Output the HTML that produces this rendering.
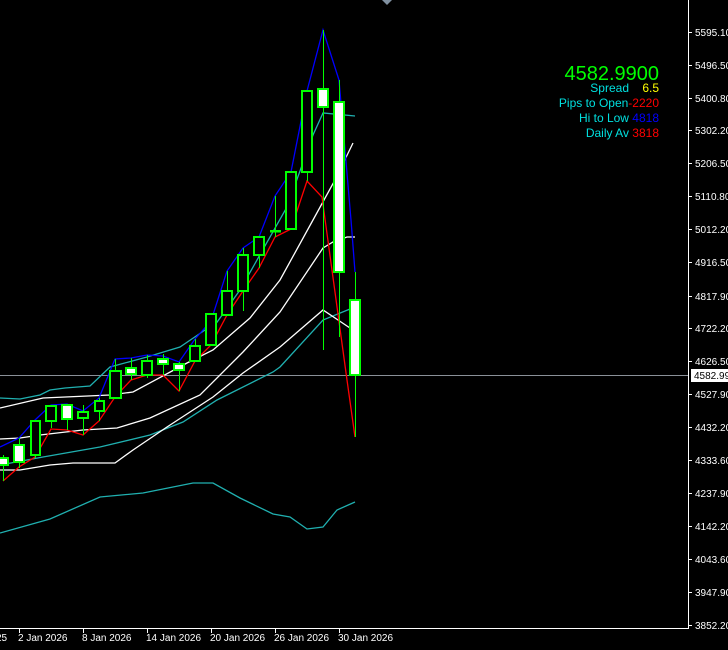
<!DOCTYPE html>
<html><head><meta charset="utf-8"><style>
html,body{margin:0;padding:0;background:#000;width:728px;height:650px;overflow:hidden}
svg{display:block}
text{font-family:"Liberation Sans",sans-serif}
</style></head><body>
<svg width="728" height="650" viewBox="0 0 728 650" xmlns="http://www.w3.org/2000/svg">
<rect width="728" height="650" fill="#000"/>
<polygon points="382,0 392,0 387,5" fill="#8090a0"/>
<line x1="0" y1="375.5" x2="689" y2="375.5" stroke="#8a9098" stroke-width="1"/>
<g fill="none" stroke-width="1.3">
<polyline stroke="#20b0b0" points="0,533 50,519 100,497 143,493 193,483 213,483 240,498 273,514 290,517 307,529 323,527 337,510 355,502"/>
<polyline stroke="#20b0b0" points="0,465 43,457 100,447 150,435 183,422 217,400 273,372 280,367 323,320 350,309"/>
<polyline stroke="#20b0b0" points="0,398 20,399 40,395 50,390 65,388 90,386 110,367 147,357 180,347 205,330 215,325 240,290 287,207 313,135 323,113 355,116"/>
<polyline stroke="#fff" points="0,470 20,470 50,465 73,463 115,463 133,450 167,427 213,397 243,373 280,347 323,310 350,328"/>
<polyline stroke="#fff" points="0,439 20,438 40,435 83,430 117,428 150,418 200,395 243,352 280,312 323,248 333,242 347,237 355,237"/>
<polyline stroke="#fff" points="0,408 43,398 110,395 133,392 187,363 213,350 250,318 280,280 313,220 335,180 353,143"/>
<polyline stroke="#0000ff" points="0,447 19,438 35,420 51,405 67,404 83,411 99,398 115,359 131,358 147,355 163,356 179,362 195,339 211,321 227,271 243,248 259,237 275,196 291,172 307,91 323,30 339,80 351,220 355,272"/>
<polyline stroke="#ff0000" points="3,481 19,467 35,457 51,429 67,430 83,435 99,421 115,397 131,380 147,375 163,375 179,391 195,361 211,345 227,315 243,291 259,268 275,237 291,229 307,181 322,197 347,380 355,437"/>
</g>
<g fill="#00ff00" shape-rendering="crispEdges">
<rect x="3" y="455" width="1.2" height="26"/>
<rect x="19" y="438" width="1.2" height="30"/>
<rect x="35" y="420" width="1.2" height="38"/>
<rect x="51" y="405" width="1.2" height="23"/>
<rect x="67" y="404" width="1.2" height="26"/>
<rect x="83" y="405" width="1.2" height="30"/>
<rect x="99" y="398" width="1.2" height="23"/>
<rect x="115" y="359" width="1.2" height="39"/>
<rect x="131" y="358" width="1.2" height="22"/>
<rect x="147" y="355" width="1.2" height="23"/>
<rect x="163" y="354" width="1.2" height="21"/>
<rect x="179" y="362" width="1.2" height="29"/>
<rect x="195" y="339" width="1.2" height="22"/>
<rect x="211" y="314" width="1.2" height="31"/>
<rect x="227" y="271" width="1.2" height="44"/>
<rect x="243" y="248" width="1.2" height="63"/>
<rect x="259" y="237" width="1.2" height="31"/>
<rect x="275" y="196" width="1.2" height="41"/>
<rect x="291" y="172" width="1.2" height="57"/>
<rect x="307" y="91" width="1.2" height="90"/>
<rect x="323" y="30" width="1.2" height="320"/>
<rect x="339" y="80" width="1.2" height="257"/>
<rect x="355" y="272" width="1.2" height="165"/>
<rect x="270" y="230" width="11" height="2.5"/>
</g>
<g stroke="#00ff00" stroke-width="2" shape-rendering="crispEdges">
<rect x="-1" y="458" width="9" height="7" fill="#fff"/>
<rect x="14" y="445" width="10" height="17" fill="#fff"/>
<rect x="31" y="421" width="9" height="34" fill="#000"/>
<rect x="46" y="406" width="10" height="15" fill="#000"/>
<rect x="62" y="405" width="10" height="14" fill="#fff"/>
<rect x="78" y="412" width="10" height="6" fill="#000"/>
<rect x="95" y="401" width="9" height="10" fill="#000"/>
<rect x="110" y="371" width="11" height="27" fill="#000"/>
<rect x="126" y="368" width="10" height="6" fill="#fff"/>
<rect x="142" y="361" width="10" height="14" fill="#000"/>
<rect x="158" y="359" width="10" height="5" fill="#fff"/>
<rect x="174" y="364" width="10" height="6" fill="#fff"/>
<rect x="190" y="346" width="10" height="15" fill="#000"/>
<rect x="206" y="314" width="10" height="31" fill="#000"/>
<rect x="222" y="291" width="10" height="24" fill="#000"/>
<rect x="238" y="255" width="10" height="36" fill="#000"/>
<rect x="254" y="237" width="10" height="18" fill="#000"/>
<rect x="286" y="172" width="10" height="57" fill="#000"/>
<rect x="302" y="91" width="10" height="81" fill="#000"/>
<rect x="318" y="89" width="10" height="18" fill="#fff"/>
<rect x="334" y="102" width="10" height="170" fill="#fff"/>
<rect x="350" y="300" width="10" height="75" fill="#fff"/>
</g>
<g stroke="#fff" stroke-width="1" shape-rendering="crispEdges">
<line x1="688.5" y1="0" x2="688.5" y2="628"/>
<line x1="0" y1="628.5" x2="689" y2="628.5"/>
<line x1="19.5" y1="628" x2="19.5" y2="633"/><line x1="83.5" y1="628" x2="83.5" y2="633"/><line x1="147.5" y1="628" x2="147.5" y2="633"/><line x1="211.5" y1="628" x2="211.5" y2="633"/><line x1="275.5" y1="628" x2="275.5" y2="633"/><line x1="339.5" y1="628" x2="339.5" y2="633"/>
<line x1="689" y1="32.5" x2="692" y2="32.5"/><line x1="689" y1="65.5" x2="692" y2="65.5"/><line x1="689" y1="98.5" x2="692" y2="98.5"/><line x1="689" y1="130.5" x2="692" y2="130.5"/><line x1="689" y1="163.5" x2="692" y2="163.5"/><line x1="689" y1="196.5" x2="692" y2="196.5"/><line x1="689" y1="229.5" x2="692" y2="229.5"/><line x1="689" y1="262.5" x2="692" y2="262.5"/><line x1="689" y1="296.5" x2="692" y2="296.5"/><line x1="689" y1="328.5" x2="692" y2="328.5"/><line x1="689" y1="361.5" x2="692" y2="361.5"/><line x1="689" y1="394.5" x2="692" y2="394.5"/><line x1="689" y1="427.5" x2="692" y2="427.5"/><line x1="689" y1="460.5" x2="692" y2="460.5"/><line x1="689" y1="493.5" x2="692" y2="493.5"/><line x1="689" y1="526.5" x2="692" y2="526.5"/><line x1="689" y1="559.5" x2="692" y2="559.5"/><line x1="689" y1="592.5" x2="692" y2="592.5"/><line x1="689" y1="625.5" x2="692" y2="625.5"/>
</g>
<g fill="#fff" font-size="10">
<text x="-4" y="641">25</text>
<text x="18" y="641">2 Jan 2026</text>
<text x="82" y="641">8 Jan 2026</text>
<text x="146" y="641">14 Jan 2026</text>
<text x="210" y="641">20 Jan 2026</text>
<text x="274" y="641">26 Jan 2026</text>
<text x="338" y="641">30 Jan 2026</text>
</g>
<g fill="#fff" font-size="10">
<text x="695" y="36">5595.10</text><text x="695" y="69">5496.50</text><text x="695" y="102">5400.80</text><text x="695" y="134">5302.20</text><text x="695" y="167">5206.50</text><text x="695" y="200">5110.80</text><text x="695" y="233">5012.20</text><text x="695" y="266">4916.50</text><text x="695" y="300">4817.90</text><text x="695" y="332">4722.20</text><text x="695" y="365">4626.50</text><text x="695" y="398">4527.90</text><text x="695" y="431">4432.20</text><text x="695" y="464">4333.60</text><text x="695" y="497">4237.90</text><text x="695" y="530">4142.20</text><text x="695" y="563">4043.60</text><text x="695" y="596">3947.90</text><text x="695" y="629">3852.20</text>
</g>
<rect x="691" y="369" width="37" height="13" fill="#fff"/>
<text x="694" y="379" font-size="10" fill="#000">4582.99</text>
<text x="659" y="80" font-size="20" fill="#00ff00" text-anchor="end">4582.9900</text>
<g font-size="12" text-anchor="end">
<text x="629" y="92" fill="#00e0e0">Spread</text>
<text x="659" y="92" fill="#ffff00">6.5</text>
<text x="659" y="107" fill="#00e0e0">Pips to Open<tspan fill="#ff0000">-2220</tspan></text>
<text x="659" y="122" fill="#00e0e0">Hi to Low <tspan fill="#0000ff">4818</tspan></text>
<text x="659" y="137" fill="#00e0e0">Daily Av <tspan fill="#ff0000">3818</tspan></text>
</g>
</svg>
</body></html>
